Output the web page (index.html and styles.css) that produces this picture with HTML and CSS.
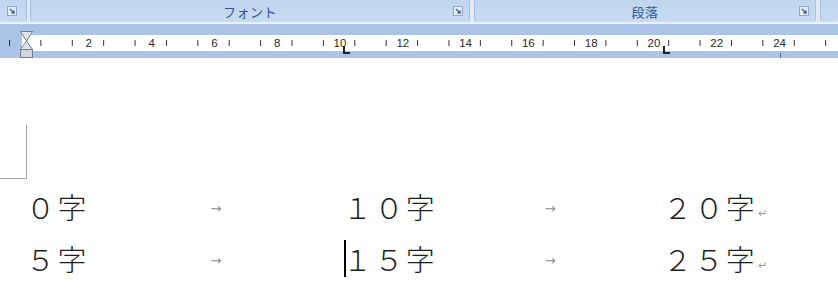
FILE: index.html
```html
<!DOCTYPE html>
<html lang="ja">
<head>
    <meta charset="UTF-8">
    <title>文書 - 字数</title>
    <link rel="stylesheet" href="styles.css">
</head>
<body>
    <div class="ribbon">
        <div class="group group-small">
            <span class="launcher"><svg width="10" height="10" viewBox="0 0 10 10"><rect x="0.5" y="0.5" width="9" height="9" fill="#e4edf8" stroke="#8fa8c9"/><path d="M3 3 L7 7 M4.5 7 H7 V4.5" stroke="#3d5f92" stroke-width="1.4" fill="none"/></svg></span>
        </div>
        <div class="group group-font">
            <span class="label">フォント</span>
            <span class="launcher"><svg width="10" height="10" viewBox="0 0 10 10"><rect x="0.5" y="0.5" width="9" height="9" fill="#e4edf8" stroke="#8fa8c9"/><path d="M3 3 L7 7 M4.5 7 H7 V4.5" stroke="#3d5f92" stroke-width="1.4" fill="none"/></svg></span>
        </div>
        <div class="group group-para">
            <span class="label">段落</span>
            <span class="launcher"><svg width="10" height="10" viewBox="0 0 10 10"><rect x="0.5" y="0.5" width="9" height="9" fill="#e4edf8" stroke="#8fa8c9"/><path d="M3 3 L7 7 M4.5 7 H7 V4.5" stroke="#3d5f92" stroke-width="1.4" fill="none"/></svg></span>
        </div>
        <div class="group group-rest"></div>
    </div>

    <div class="ruler">
        <div class="strip">
            <div class="numbers">
                <span>2</span><span>4</span><span>6</span><span>8</span><span>10</span><span>12</span>
                <span>14</span><span>16</span><span>18</span><span>20</span><span>22</span><span>24</span>
            </div>
        </div>
        <!-- indent marker -->
        <svg class="indent" width="13" height="27" viewBox="0 0 13 27">
            <path d="M0.5 0.5 H12.5 L6.5 10 Z" fill="#dfe4ec" stroke="#6d7d92"/>
            <path d="M6.5 10 L12.5 18.5 H0.5 Z" fill="#dfe4ec" stroke="#6d7d92"/>
            <rect x="0.5" y="18.5" width="12" height="8" fill="#cfd6e0" stroke="#6d7d92"/>
        </svg>
        <span class="tab-stop" style="left: 343px"></span>
        <span class="tab-stop" style="left: 663px"></span>
        <span class="under-tick"></span>
    </div>

    <div class="page">
        <div class="margin-mark"></div>
        <div class="lines">
            <div class="row">
                <div class="cell col1">０字<span class="tab">→</span></div>
                <div class="cell col2">１０字<span class="tab">→</span></div>
                <div class="cell">２０字<span class="ret">↵</span></div>
            </div>
            <div class="row">
                <div class="cell col1">５字<span class="tab">→</span></div>
                <div class="cell col2"><span class="cursor"></span>１５字<span class="tab">→</span></div>
                <div class="cell">２５字<span class="ret">↵</span></div>
            </div>
        </div>
    </div>
</body>
</html>
```

FILE: styles.css
```css
* {
    margin: 0;
    padding: 0;
    box-sizing: border-box;
}

body {
    width: 838px;
    height: 300px;
    overflow: hidden;
    background-color: #ffffff;
    font-family: "Noto Sans CJK JP", "Liberation Sans", sans-serif;
}

/* ribbon group labels */
.ribbon {
    display: flex;
    height: 24px;
    background-color: #dfeaf8;
    border-bottom: 2px solid #e9f1fb;
}

.group {
    height: 22px;
    display: flex;
    align-items: center;
    justify-content: center;
    position: relative;
    background: linear-gradient(#c0d5ef, #c8dbf2);
    border-right: 1px solid #a9c0de;
    border-bottom-left-radius: 3px;
    border-bottom-right-radius: 3px;
}

.group-small {
    width: 27px;
    justify-content: flex-start;
    padding-left: 7px;
}

.group-font {
    width: 440px;
    margin-left: 3px;
    border-left: 1px solid #a9c0de;
}

.group-para {
    width: 342px;
    margin-left: 4px;
    border-left: 1px solid #a9c0de;
}

.group-rest {
    flex: 1;
    margin-left: 4px;
    border-left: 1px solid #a9c0de;
    border-right: none;
}

.label {
    font-size: 13px;
    color: #30599a;
    letter-spacing: 0.5px;
}

.group-font .launcher,
.group-para .launcher {
    position: absolute;
    right: 6px;
    top: 6px;
}

.launcher svg {
    display: block;
}

/* ruler */
.ruler {
    position: relative;
    height: 34px;
    background-color: #aac3e6;
    padding-top: 11px;
}

.strip {
    height: 16px;
    background:
        linear-gradient(to right, #2e2e2e 1px, transparent 1px) 9px center / 31.4px 6px repeat-x,
        linear-gradient(to right, #aac3e6 22px, #ffffff 22px);
}

.numbers {
    display: flex;
    padding-left: 57.4px;
    font-family: "Liberation Sans", sans-serif;
    font-size: 11.5px;
    line-height: 16px;
    color: #2b2b2b;
}

.numbers span {
    width: 62.8px;
    flex-shrink: 0;
    text-align: center;
    background-color: #ffffff;
    background-clip: content-box;
    padding: 0 23px;
}

.indent {
    position: absolute;
    left: 20px;
    top: 7px;
}

.tab-stop {
    position: absolute;
    top: 22px;
    width: 7px;
    height: 8px;
    border-left: 2px solid #222222;
    border-bottom: 2px solid #222222;
}

.under-tick {
    position: absolute;
    left: 780px;
    top: 29px;
    width: 1px;
    height: 5px;
    background-color: #4a6a99;
}

/* document page */
.page {
    padding-top: 67px;
}

.margin-mark {
    width: 27px;
    height: 54px;
    border-right: 1px solid #a6a6a6;
    border-bottom: 1px solid #a6a6a6;
}

.lines {
    margin-top: 1px;
    padding-left: 26px;
}

.row {
    display: flex;
    height: 52px;
    line-height: 52px;
    font-size: 29px;
    font-weight: 300;
    letter-spacing: 2.4px;
    color: #1e1e1e;
}

.cell {
    position: relative;
    display: flex;
    white-space: nowrap;
}

.col1 {
    width: 317px;
}

.col2 {
    width: 320px;
}

.tab {
    flex: 1;
    display: flex;
    align-items: center;
    justify-content: center;
    font-family: "DejaVu Sans", sans-serif;
    font-size: 13px;
    font-weight: normal;
    letter-spacing: 0;
    color: #8a8a8a;
    padding-top: 6px;
}

.ret {
    font-family: "DejaVu Sans", sans-serif;
    font-size: 11px;
    font-weight: normal;
    letter-spacing: 0;
    color: #9a9a9a;
    margin-left: 1px;
    padding-top: 8px;
}

.cursor {
    position: absolute;
    left: 1px;
    top: 8px;
    width: 2px;
    height: 37px;
    background-color: #000000;
}
```
